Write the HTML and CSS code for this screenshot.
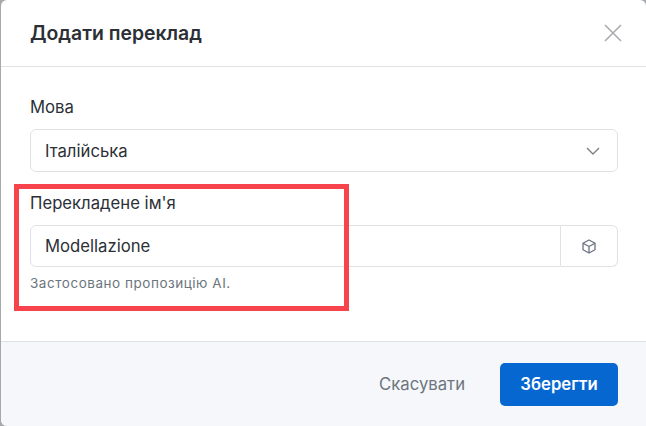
FILE: index.html
```html
<!DOCTYPE html>
<html lang="uk">
<head>
    <meta charset="UTF-8">
    <meta name="viewport" content="width=device-width, initial-scale=1.0">
    <title>Додати переклад</title>
    <link rel="stylesheet" href="styles.css">
</head>
<body>
    <div class="modal">
        <div class="modal-header">
            <h1>Додати переклад</h1>
            <button class="close-button" aria-label="Закрити">
                <svg width="20" height="20" viewBox="0 0 20 20" fill="none" stroke="#a9abae" stroke-width="1.6">
                    <path d="M2 2 L18 18 M18 2 L2 18"/>
                </svg>
            </button>
        </div>

        <div class="modal-body">
            <div class="field">
                <label class="field-label">Мова</label>
                <div class="select-box">
                    <span>Італійська</span>
                    <svg width="14" height="8" viewBox="0 0 14 8" fill="none" stroke="#7b8088" stroke-width="1.4">
                        <path d="M1 1 L7 7 L13 1"/>
                    </svg>
                </div>
            </div>
            <div class="field">
                <label class="field-label">Перекладене ім'я</label>
                <div class="input-group">
                    <div class="input-box">Modellazione</div>
                    <button class="icon-button" aria-label="AI">
                        <svg width="14" height="15" viewBox="0 0 14 15" fill="none" stroke="#6b7280" stroke-width="1.3" stroke-linejoin="round">
                            <path d="M7 1 L13 4.2 V10.8 L7 14 L1 10.8 V4.2 Z"/>
                            <path d="M1 4.2 L7 7.5 L13 4.2 M7 7.5 V14"/>
                        </svg>
                    </button>
                </div>
                <p class="hint">Застосовано пропозицію AI.</p>
            </div>
        </div>

        <div class="modal-footer">
            <button class="cancel-button">Скасувати</button>
            <button class="save-button">Зберегти</button>
        </div>
    </div>

    <div class="highlight"></div>
</body>
</html>
```

FILE: styles.css
```css
html, body {
    height: 100%;
}
body {
    margin: 0;
    overflow: hidden;
    font-family: Inter, 'Liberation Sans', sans-serif;
    background-color: #a6a8ac;
    color: #2b3036;
}
button {
    font-family: inherit;
    border: none;
    background: none;
    cursor: pointer;
}
.modal {
    display: flex;
    flex-direction: column;
    height: 426px;
    margin-left: 1px;
    background-color: white;
    border-radius: 6px 6px 0 6px;
    overflow: hidden;
}
.modal-header {
    display: flex;
    justify-content: space-between;
    align-items: center;
    height: 66px;
    padding: 0 23px 0 29px;
    border-bottom: 1px solid #dfe2e5;
}
.modal-header h1 {
    margin: 0;
    font-size: 19.4px;
    font-weight: 600;
}
.close-button {
    display: flex;
    padding: 0;
}
.modal-body {
    flex: 1;
    padding: 28px 28px 0 29px;
}
.field {
    margin-bottom: 19px;
}
.field-label {
    display: block;
    margin-bottom: 10px;
    font-size: 16.7px;
    line-height: 24px;
}
.select-box {
    display: flex;
    justify-content: space-between;
    align-items: center;
    height: 41px;
    padding: 0 17px 0 14px;
    border: 1px solid #dfe2e5;
    border-radius: 6px;
    font-size: 16.7px;
}
.input-group {
    display: flex;
    height: 42px;
}
.input-box {
    flex: 1;
    display: flex;
    align-items: center;
    padding-left: 14px;
    border: 1px solid #dfe2e5;
    border-radius: 6px 0 0 6px;
    font-size: 16.7px;
}
.icon-button {
    display: flex;
    align-items: center;
    justify-content: center;
    width: 57px;
    padding: 0 1px 0 0;
    border: 1px solid #dfe2e5;
    border-left: none;
    border-radius: 0 6px 6px 0;
}
.hint {
    margin: 7px 0 0;
    font-size: 13.5px;
    letter-spacing: 0.53px;
    line-height: 18px;
    color: #6c757d;
}
.modal-footer {
    display: flex;
    justify-content: flex-end;
    align-items: center;
    gap: 35px;
    height: 84px;
    padding: 0 28px 0 0;
    border-top: 1px solid #dfe2e5;
    background-color: #f5f7fb;
}
.cancel-button {
    padding: 0;
    font-size: 16.7px;
    color: #6c757d;
}
.save-button {
    width: 118px;
    height: 43px;
    border-radius: 5px;
    background-color: #0667d0;
    color: white;
    font-size: 16.7px;
    font-weight: 600;
}
.highlight {
    position: absolute;
    left: 14px;
    top: 184px;
    width: 325px;
    height: 117px;
    border: 5px solid #f6434c;
}
```
